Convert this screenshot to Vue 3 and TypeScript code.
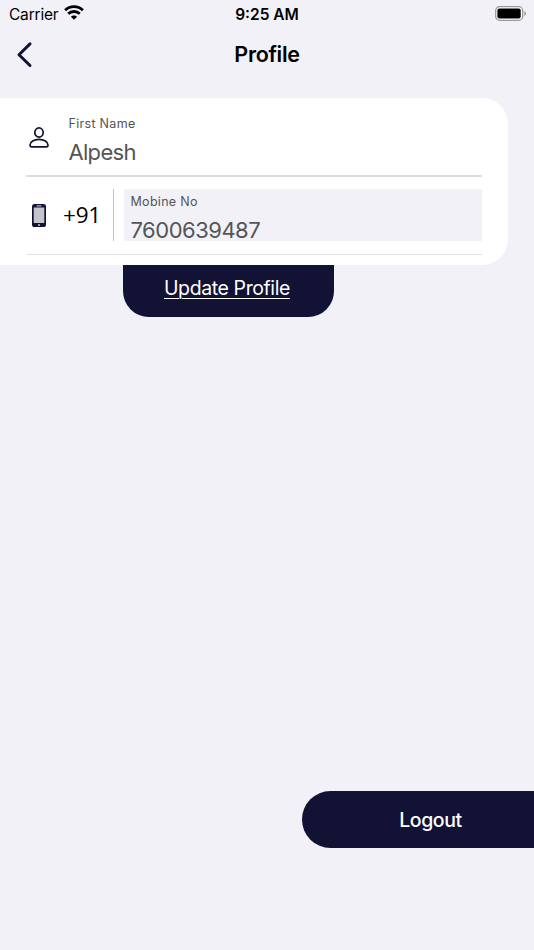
<script setup lang="ts">
import { ref } from 'vue'

const firstName = ref<string>('Alpesh')
const mobile = ref<string>('7600639487')
const countryCode = '+91'
</script>

<template>
  <div class="screen">
    <div class="status">
      <div class="carrier">
        <span class="carrier-name">Carrier</span>
        <svg class="wifi" width="20" height="15" viewBox="0 0 20 15" fill="none" stroke="#000" stroke-width="2.8">
          <path d="M1.1 5.3C6.1.5 13.9.5 18.9 5.3" />
          <path d="M4.2 8.8C7.5 5.7 12.5 5.7 15.8 8.8" />
          <path d="M10 14.8 6.9 11.8C8.6 10 11.4 10 13.1 11.8Z" fill="#000" stroke="none" />
        </svg>
      </div>
      <span class="time">9:25 AM</span>
      <svg class="battery" width="32" height="16" viewBox="0 0 32 16">
        <rect x=".7" y=".7" width="27" height="13.6" rx="3.9" fill="#fff" stroke="#98989b" stroke-width="1.3" />
        <rect x="2.4" y="2.4" width="23.3" height="10" rx="2" />
        <path d="M29.3 5.1Q31 5.9 31 7.5T29.3 9.9Z" fill="#98989b" />
      </svg>
    </div>
    <header class="header">
      <button class="back" aria-label="Back">
        <svg width="18" height="28" viewBox="0 0 18 28" fill="none" stroke="#121235" stroke-width="3" stroke-linecap="round" stroke-linejoin="round">
          <path d="M14 2.9 3 13.7 14 24.5" />
        </svg>
      </button>
      <h1 class="title">Profile</h1>
      <span></span>
    </header>
    <main class="content">
      <section class="card">
        <div class="row name-row">
          <svg class="person" width="20" height="22" viewBox="0 0 20 22" fill="none" stroke="#121235" stroke-width="1.7" stroke-linejoin="round">
            <ellipse cx="10" cy="5.5" rx="4.2" ry="4.6" />
            <path d="M1 18C1 14.8 5 12.3 10 12.3S19 14.8 19 18Q19 19.8 17.3 19.8H2.7Q1 19.8 1 18Z" />
          </svg>
          <div class="field">
            <span class="label">First Name</span>
            <span class="value">{{ firstName }}</span>
          </div>
        </div>
        <div class="row phone-row">
          <svg class="phone" width="14" height="23" viewBox="0 0 14 23">
            <rect width="14" height="23" rx="2.6" fill="#121235" />
            <rect x="1.7" y="3.5" width="10.6" height="15.5" fill="#c4c4cd" />
            <path d="M5 1.9h4" stroke="#d6d6df" stroke-width="1" stroke-linecap="round" />
            <circle cx="7" cy="21" r="1" fill="#c9c9d4" />
          </svg>
          <span class="code">{{ countryCode }}</span>
          <i class="separator"></i>
          <div class="field mobile">
            <span class="label">Mobine No</span>
            <span class="value number">{{ mobile }}</span>
          </div>
        </div>
      </section>
      <button class="update"><span>Update Profile</span></button>
    </main>
    <button class="logout"><span>Logout</span></button>
  </div>
</template>

<style>
body { margin: 0; background: #f2f1f7; }
</style>

<style scoped>
.screen {
  box-sizing: border-box;
  width: 534px;
  height: 950px;
  padding-bottom: 102px;
  display: flex;
  flex-direction: column;
  overflow: hidden;
  background: #f2f1f7;
  color: #000;
  font-family: Inter, "Liberation Sans", sans-serif;
}
button { border: 0; padding: 0; margin: 0; font: inherit; }
.status {
  height: 28px;
  flex: none;
  padding: 0 7px 0 9px;
  display: grid;
  grid-template-columns: 1fr auto 1fr;
  align-items: start;
}
.carrier { display: flex; gap: 6px; }
.carrier-name { width: 49px; margin-top: 1px; font-size: 15.5px; line-height: 27px; letter-spacing: -.2px; white-space: nowrap; }
.wifi { margin-top: 5px; }
.time { margin: 1px 2px 0 0; font-size: 15.5px; font-weight: 600; line-height: 27px; }
.battery { justify-self: end; margin-top: 6px; }
.header {
  height: 53px;
  flex: none;
  display: grid;
  grid-template-columns: 1fr auto 1fr;
  align-items: center;
  padding: 0 16px;
}
.back { justify-self: start; height: 28px; background: none; }
.back svg { display: block; }
.title { margin: -1px 0 0; font-size: 21.5px; line-height: 28px; font-weight: 600; letter-spacing: -.3px; }
.content { padding-top: 17px; flex: 1; }
.card {
  box-sizing: border-box;
  width: 508px;
  height: 167px;
  padding: 0 26px;
  border-radius: 0 26px 26px 0;
  background: #fff;
}
.row { display: flex; box-sizing: border-box; }
.name-row { height: 79px; padding: 15px 0 0 3px; border-bottom: 2px solid #dcdcde; }
.person { margin-top: 14px; flex: none; }
.name-row .field { margin-left: 19.5px; }
.field { display: flex; flex-direction: column; color: #555; white-space: nowrap; }
.label { padding-top: 1px; font-size: 12.5px; line-height: 20px; letter-spacing: .3px; }
.value { font-size: 22px; line-height: 28px; margin-top: 4px; letter-spacing: -.7px; }
.number { letter-spacing: -.5px; }
.phone-row { height: 78px; padding: 12px 0 0 6px; border-bottom: 1px solid #e3e3e6; }
.phone { margin-top: 15px; flex: none; }
.code { width: 50px; margin-left: 17px; flex: none; font-family: "Open Sans", sans-serif; font-size: 22.5px; font-weight: 400; line-height: 51px; letter-spacing: -.2px; }
.separator { width: 1px; height: 52px; background: #c4c4c7; }
.mobile { box-sizing: border-box; height: 52px; margin-left: 10px; padding: 2px 0 0 6.5px; flex: 1; background: #f2f1f7; }
.mobile .value { line-height: 25px; margin-top: 6px; height: 23px; }
.update {
  display: block;
  width: 211px;
  height: 51.5px;
  margin-left: 123px;
  border-radius: 0 0 26px 26px;
  background: #121235;
  color: #fff;
  font-size: 19.5px;
  line-height: 46px;
}
.update span { display: block; height: 52px; margin-right: 3px; letter-spacing: -.4px; text-decoration: underline; text-decoration-thickness: 1px; text-underline-offset: 3px; }
.logout {
  width: 232px;
  height: 57px;
  flex: none;
  align-self: flex-end;
  padding-left: 25px;
  border-radius: 28.5px 0 0 28.5px;
  background: #121235;
  color: #fff;
  font-size: 19.5px;
  font-weight: 500;
  letter-spacing: -.4px;
}
</style>
